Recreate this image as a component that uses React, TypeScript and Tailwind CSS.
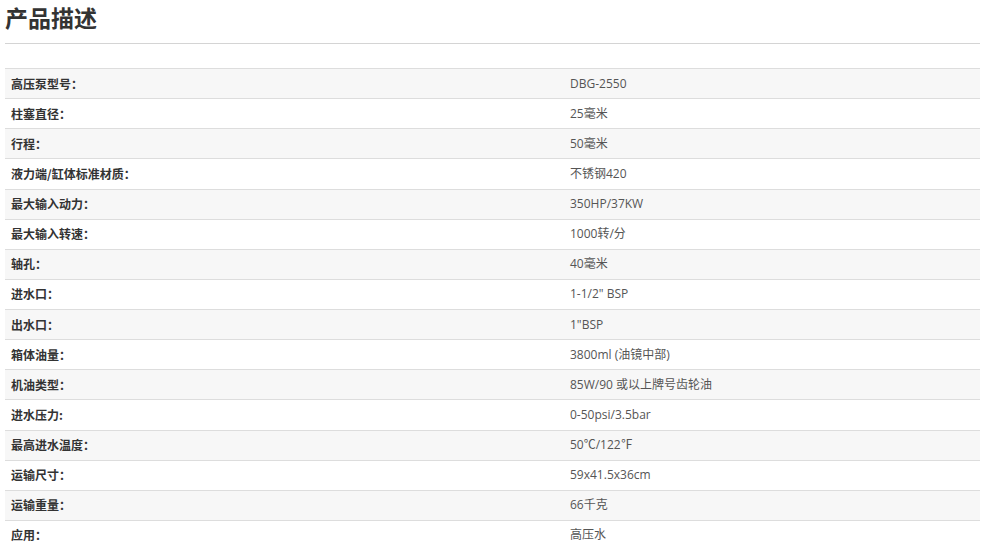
const specs: [string, string][] = [
  ["高压泵型号：", "DBG-2550"],
  ["柱塞直径：", "25毫米"],
  ["行程：", "50毫米"],
  ["液力端/缸体标准材质：", "不锈钢420"],
  ["最大输入动力：", "350HP/37KW"],
  ["最大输入转速：", "1000转/分"],
  ["轴孔：", "40毫米"],
  ["进水口：", "1-1/2\" BSP"],
  ["出水口：", "1\"BSP"],
  ["箱体油量：", "3800ml (油镜中部)"],
  ["机油类型：", "85W/90 或以上牌号齿轮油"],
  ["进水压力:", "0-50psi/3.5bar"],
  ["最高进水温度：", "50℃/122℉"],
  ["运输尺寸：", "59x41.5x36cm"],
  ["运输重量：", "66千克"],
  ["应用：", "高压水"],
];

export default function App() {
  return (
    <div className="h-[545px] overflow-hidden bg-white px-[5px] font-['Open_Sans','Noto_Sans_CJK_SC',sans-serif]">
      <h2 className="pt-[3px] text-[23px] leading-[28px] font-bold text-[#333] font-['Noto_Sans_CJK_SC',sans-serif]">
        产品描述
      </h2>
      <div className="mt-[12px] h-px w-[975px] bg-[#d4d4d4]" />
      <table className="mt-[24px] w-[975px] border-collapse">
        <tbody>
          {specs.map(([k, v], i) => (
            <tr key={k} className={i % 2 === 0 ? "bg-[#f7f7f7]" : "bg-white"}>
              <td className="h-[30.14px] w-[559px] border-t border-b border-[#dddddd] pl-[6px] align-middle text-[12px] font-bold text-[#333] font-['Noto_Sans_CJK_SC',sans-serif]">
                {k}
              </td>
              <td className="h-[30.14px] border-t border-b border-[#dddddd] pl-[6px] align-middle text-[12px] text-[#555]">
                {v}
              </td>
            </tr>
          ))}
        </tbody>
      </table>
    </div>
  );
}
